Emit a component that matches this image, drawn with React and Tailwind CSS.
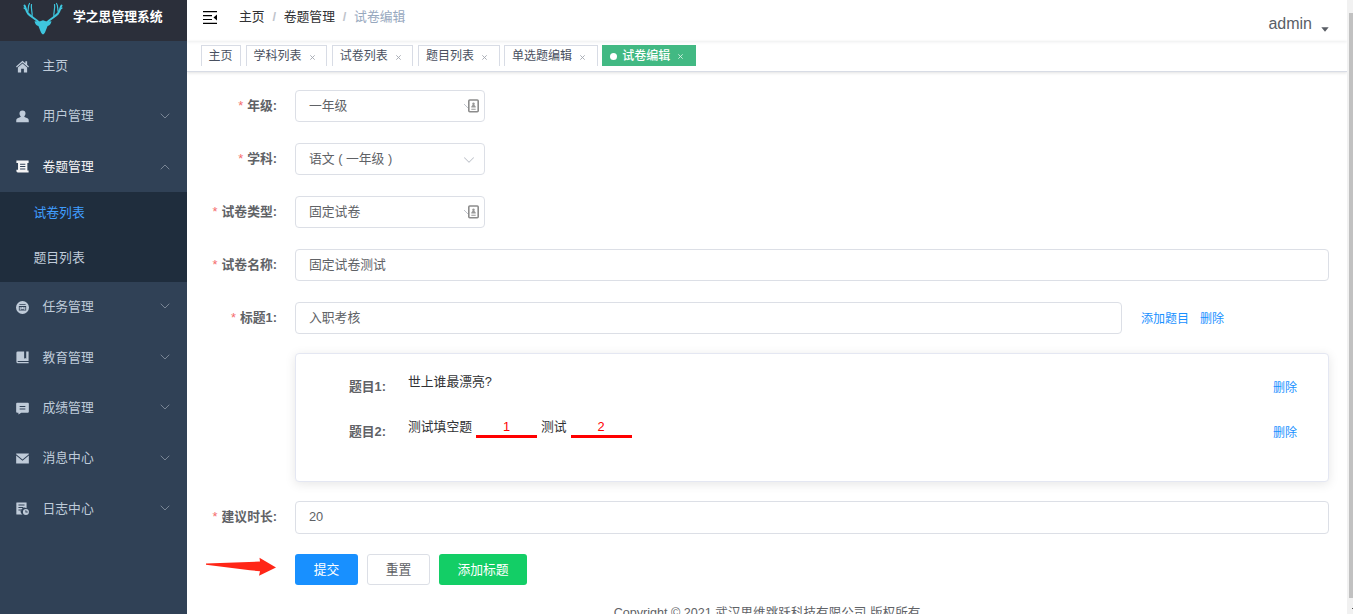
import { ChevronDown, ChevronUp } from "lucide-react";

const icons = {
    home: (
        <path d="M8 .8 0 8l1 1.100L8 3l7 6.100L16 8l-2.300-2.100V1.600h-2.200v2.300zM8 4.400 2.300 9.300v6h4v-4.600h3.400v4.600h4v-6z" />
    ),
    user: (
        <path d="M8 .7a3.700 3.700 0 0 1 3.700 3.700c0 1.400-.7 2.600-1.500 3.400 0 .9.6 1.200 1.600 1.500 2.300.7 3.900 1.500 3.900 3.600v2.300H.3v-2.300c0-2.100 1.600-2.900 3.900-3.600 1-.3 1.600-.6 1.600-1.500-.9-.8-1.500-2-1.500-3.400A3.700 3.700 0 0 1 8 .7z" />
    ),
    paper: (
        <path fillRule="evenodd" d="M.5.500h15v3.200H14v9.300h1.500v2.500H2.200A1.900 1.900 0 0 1 .5 13.600V12h2V3.700h-2zM5 4.500v1.200h6.500V4.500zm0 3v1.200h6.500V7.500zm0 3v1.200h6.500v-1.200z" />
    ),
    task: (
        <path fillRule="evenodd" d="M8 0a8 8 0 1 1 0 16A8 8 0 0 1 8 0zM4.200 4v1h7.600V4zm-.7 2.300v5.500h9V6.300zm1 1h7v3.500h-7zm1 .7v1h1.500V8zm3.500 0v1h1.500V8zm-3 1.700v.700h4v-.700z" />
    ),
    education: (
        <path fillRule="evenodd" d="M2.200.500H10v9l1.300-1 1.300 1v-9h2.900v11.700H2.600a.7.7 0 0 0 0 1.400h12.900v1.600H2.400A1.900 1.900 0 0 1 .5 13.300V2.200A1.700 1.700 0 0 1 2.200.500z" />
    ),
    answer: (
        <path fillRule="evenodd" d="M1.300 1h13.400c.6 0 1.100.500 1.100 1.100v10c0 .600-.500 1.100-1.100 1.100H6.500L3 15.500v-2.300H1.300c-.600 0-1.100-.500-1.100-1.100v-10C.2 1.500.7 1 1.300 1zM4.500 4.800V6h7V4.800zm0 3.200v1.200h7V8z" />
    ),
    message: (
        <path d="M.2 1.800h15.600v.9L8 9.200.2 2.700zM.2 4.200 8 10.700l7.800-6.500v9.900H.2z" />
    ),
    log: (
        <>
            <path fillRule="evenodd" d="M1 .5h12v7.200a4.600 4.600 0 0 0-5 7.800H1A.6.6 0 0 1 .4 15V1A.6.6 0 0 1 1 .5zM3 3.200v1.200h7.500V3.200zm0 3v1.200h6V6.200zm0 3v1.200h3.500V9.200z" />
            <path fillRule="evenodd" d="M12.200 8.500a3.700 3.700 0 1 1 0 7.400 3.700 3.700 0 0 1 0-7.400zm-.6 1.500v2.800h2.800v-1.100h-1.700V10z" />
        </>
    ),
};

const menuTop = [
    { name: "主页", icon: "home" },
    { name: "用户管理", icon: "user", arrow: "down" },
    { name: "卷题管理", icon: "paper", arrow: "up" },
];

const menuBottom = [
    { name: "任务管理", icon: "task", arrow: "down" },
    { name: "教育管理", icon: "education", arrow: "down" },
    { name: "成绩管理", icon: "answer", arrow: "down" },
    { name: "消息中心", icon: "message", arrow: "down" },
    { name: "日志中心", icon: "log", arrow: "down" },
];

const tags = ["学科列表", "试卷列表", "题目列表", "单选题编辑"];

function Logo() {
    return (
        <svg width="40" height="33" viewBox="0 0 40 33" fill="none" stroke="#3ec5dd" strokeLinecap="round">
            <path strokeWidth="2" d="M16 20.500C12.500 16.500 8 15 5 11.500 3 9 3 6 1.500 3.500M24 20.500c3.500-4 8-5.500 11-9C37 9 37 6 38.500 3.500" />
            <path strokeWidth="1.200" d="M4.500 10.500C6 7 4.500 4 6.500 1.500M3 7.500 1 6M9 14.500C10 11 7.500 7 8.500 2.500M35.500 10.500C34 7 35.500 4 33.500 1.500M37 7.500l2-1.500M31 14.500c-1-3.500 1.500-7.500.500-12" />
            <path fill="#3ec5dd" stroke="none" d="M11.500 19.200l5 .3 3.500-1.200 3.500 1.200 5-.3c-.5 2.600-1.900 4.200-3.900 4.800l-2.600 6.600-1.300 1.600h-1.400l-1.300-1.600-2.600-6.600c-2-.6-3.400-2.200-3.900-4.800z" />
        </svg>
    );
}

function MenuItem({ name, icon, arrow }) {
    const open = arrow === "up";
    return (
        <div className={`flex h-[50.4px] items-center pr-[14px] pl-4 ${open ? "text-[#f4f4f5]" : "text-[#bfcbd9]"}`}>
            <svg className="shrink-0" width="13" height="13" viewBox="0 0 16 16" fill="currentColor">{icons[icon]}</svg>
            <span className="mb-px ml-[13.5px] flex-1">{name}</span>
            {arrow === "down" && <ChevronDown className="mb-[2px] text-[#7f8b9a]" size={16} strokeWidth={1.4} />}
            {open && <ChevronUp className="text-[#7f8b9a]" size={16} strokeWidth={1.4} />}
        </div>
    );
}

function Sidebar() {
    return (
        <div className="flex w-[187px] shrink-0 flex-col bg-[#304156]">
            <div className="flex h-[41px] shrink-0 items-start bg-[#2b2f3a] pt-[2px] pl-[23px] text-white">
                <Logo />
                <h1 className="mt-[3px] ml-[10px] text-[12.8px] leading-6 font-bold">学之思管理系统</h1>
            </div>
            {menuTop.map((item) => <MenuItem key={item.name} {...item} />)}
            <div className="h-[90px] shrink-0 bg-[#1f2d3d] pl-[33.5px] leading-[42px] text-[#bfcbd9]">
                <div className="h-[45px] text-[#409eff]">试卷列表</div>
                <div className="h-[45px]">题目列表</div>
            </div>
            {menuBottom.map((item) => <MenuItem key={item.name} {...item} />)}
        </div>
    );
}

function Navbar() {
    return (
        <div className="flex h-[41px] shrink-0 justify-between pr-[18px] pl-4 shadow-[0_1px_3px_rgba(0,21,41,0.08)]">
            <div className="flex h-[34px] items-center">
                <svg width="14" height="13" viewBox="0 0 14 13" fill="none" stroke="#000" strokeWidth="1.200">
                    <path d="M0 .6h14M0 4.600h9M0 8.500h9M0 12.400h14" />
                    <path d="M14 3.500v6l-3.500-3z" fill="#000" stroke="none" />
                </svg>
                <div className="ml-[22px] flex text-[#303133]">
                    <span>主页</span>
                    <span className="mx-[7.800px] font-bold text-[#c0c4cc]">/</span>
                    <span>卷题管理</span>
                    <span className="mx-[7.800px] font-bold text-[#c0c4cc]">/</span>
                    <span className="text-[#97a8be]">试卷编辑</span>
                </div>
            </div>
            <div className="flex pt-3 text-[16px] leading-6 text-[#5a5e66]">
                <span>admin</span>
                <svg className="mt-[15px] ml-[9px]" width="8" height="5" viewBox="0 0 8 5"><path d="M.3.3h7.400L4 4.800z" fill="#5a5e66" /></svg>
            </div>
        </div>
    );
}

function Close({ light }) {
    return (
        <svg className="mt-[2px] ml-[8px]" width="5" height="5" viewBox="0 0 5 5" stroke={light ? "#d5efe2" : "#a3a7b0"} strokeWidth="0.9">
            <path d="M.3.3l4.400 4.400M4.700.3.3 4.700" />
        </svg>
    );
}

function TagsView() {
    return (
        <div className="flex h-[31px] shrink-0 gap-[4.500px] border-b border-[#d8dce5] pt-[4px] pl-[14px] text-[12px] leading-[20px] text-[#495060] shadow-[0_1px_3px_rgba(0,0,0,0.12)]">
            <div className="h-[21px] w-[40px] border border-b-0 border-[#d8dce5] pl-[6.500px]">主页</div>
            {tags.map((tag) => (
                <div key={tag} className="flex h-[21px] items-center border border-b-0 border-[#d8dce5] pr-[11.700px] pl-[7px]">
                    {tag}
                    <Close />
                </div>
            ))}
            <div className="flex h-[21px] w-[94px] items-center bg-[#42b983] pl-2 font-medium text-white">
                <span className="mt-[2px] mr-[5px] h-[7px] w-[7px] rounded-full bg-white" />
                试卷编辑
                <Close light />
            </div>
        </div>
    );
}

function FormItem({ label, children }) {
    return (
        <div className="mb-[21px] flex h-[32px] shrink-0">
            <div className="w-[90px] text-right leading-[31px] font-bold whitespace-nowrap text-[#606266]">
                <span className="mr-[4px] font-normal text-[#f56c6c]">*</span>{label}:
            </div>
            <div className="ml-[18px] flex flex-1">{children}</div>
        </div>
    );
}

function Input({ value, className }) {
    return (
        <div className={`h-full rounded-[4px] border border-[#dcdfe6] bg-white px-[13px] leading-[30px] text-[#606266] ${className}`}>
            {value}
        </div>
    );
}

function Select({ value, badge }) {
    return (
        <div className="flex h-full w-[190px] items-center justify-between rounded-[4px] border border-[#dcdfe6] bg-white pr-[4px] pl-[13px] text-[#606266]">
            <span>{value}</span>
            {badge ? (
                <svg width="16" height="14" viewBox="0 0 16 14" fill="none">
                    <path d="M0 5l5 5" stroke="#c0c4cc" />
                    <rect x="4.800" y="1" width="9.400" height="11.800" rx="1" fill="#fff" stroke="#8c8c8c" strokeWidth="1.600" />
                    <path d="M9.500 3.500a1.300 1.300 0 0 1 .8 2.300l1.400 1.700v1H7.300v-1l1.400-1.700a1.300 1.300 0 0 1 .8-2.300zM7.300 9.700h4.400v1H7.300z" fill="#999" />
                </svg>
            ) : (
                <ChevronDown className="mt-[2px] mr-[2px] text-[#c0c4cc]" size={18} strokeWidth={1.400} />
            )}
        </div>
    );
}

function Blank({ children }) {
    return <span className="mx-[4px] inline-block h-[21px] w-[61px] border-b-[3px] border-[#f00] text-center text-[#f00]">{children}</span>;
}

function Question({ label, children }) {
    return (
        <div className="flex h-[45px]">
            <div className="w-[71px] pt-[11px] text-right leading-5 font-bold text-[#606266]">{label}:</div>
            <div className="ml-[22px] flex flex-1 pt-[6px] leading-5 text-[#303133]">{children}</div>
            <span className="pt-[12px] pr-[31px] text-[12px] leading-5 text-[#1890ff]">删除</span>
        </div>
    );
}

function PaperForm() {
    return (
        <div className="flex flex-1 flex-col pt-[18px] pr-[18px]">
            <FormItem label="年级"><Select value="一年级" badge /></FormItem>
            <FormItem label="学科"><Select value="语文 ( 一年级 )" /></FormItem>
            <FormItem label="试卷类型"><Select value="固定试卷" badge /></FormItem>
            <FormItem label="试卷名称"><Input className="flex-1" value="固定试卷测试" /></FormItem>
            <FormItem label="标题1">
                <Input className="w-[827px]" value="入职考核" />
                <span className="ml-[19px] text-[12px] leading-[34px] text-[#1890ff]">添加题目</span>
                <span className="ml-[11px] text-[12px] leading-[34px] text-[#1890ff]">删除</span>
            </FormItem>
            <div className="-mt-[2px] mb-[19px] ml-[108px] h-[129px] shrink-0 rounded-[4px] border border-[#e4e7f2] bg-white pt-[12px] pl-[19px] shadow-[0_2px_11px_rgba(0,0,0,0.1)]">
                <Question label="题目1">世上谁最漂亮?</Question>
                <Question label="题目2">测试填空题<Blank>1</Blank>测试<Blank>2</Blank></Question>
            </div>
            <FormItem label="建议时长"><Input className="min-h-[33px] flex-1" value="20" /></FormItem>
            <div className="flex h-[31px] shrink-0 text-center leading-[31px]">
                <svg className="mt-[3px] mr-[19px] ml-[19px]" width="70" height="20" viewBox="0 0 70 20">
                    <path d="M0 7.800V6.600L54 4.500 53.500.8 70 10.500 53 18.800l1-4.500L44 13.200z" fill="#ff2617" />
                </svg>
                <div className="w-[63px] rounded-[3px] bg-[#1890ff] text-white">提交</div>
                <div className="ml-[9px] w-[63px] rounded-[3px] border border-[#dcdfe6] leading-[29px] text-[#606266]">重置</div>
                <div className="ml-[9px] w-[88px] rounded-[3px] bg-[#13ce66] text-white">添加标题</div>
            </div>
            <div className="mt-[18px] -mr-[18px] h-5 shrink-0 text-center text-[12.6px] leading-5 whitespace-nowrap text-[#606266]">
                Copyright © 2021 武汉思维跳跃科技有限公司 版权所有
            </div>
        </div>
    );
}

export default function App() {
    return (
        <div className="flex h-[614px] w-[1353px] overflow-hidden bg-white font-['Liberation_Sans','Noto_Sans_CJK_SC',sans-serif] text-[12.8px]">
            <Sidebar />
            <div className="flex w-[1160px] flex-col overflow-hidden">
                <Navbar />
                <TagsView />
                <PaperForm />
            </div>
            <div className="flex w-[6px] flex-col bg-[#f1f1f1] pt-[13px] pl-[2px]">
                <div className="h-[585px] bg-[#c1c1c1]" />
                <div className="mt-[10px] ml-[3px] h-px w-px bg-[#505050]" />
            </div>
        </div>
    );
}
